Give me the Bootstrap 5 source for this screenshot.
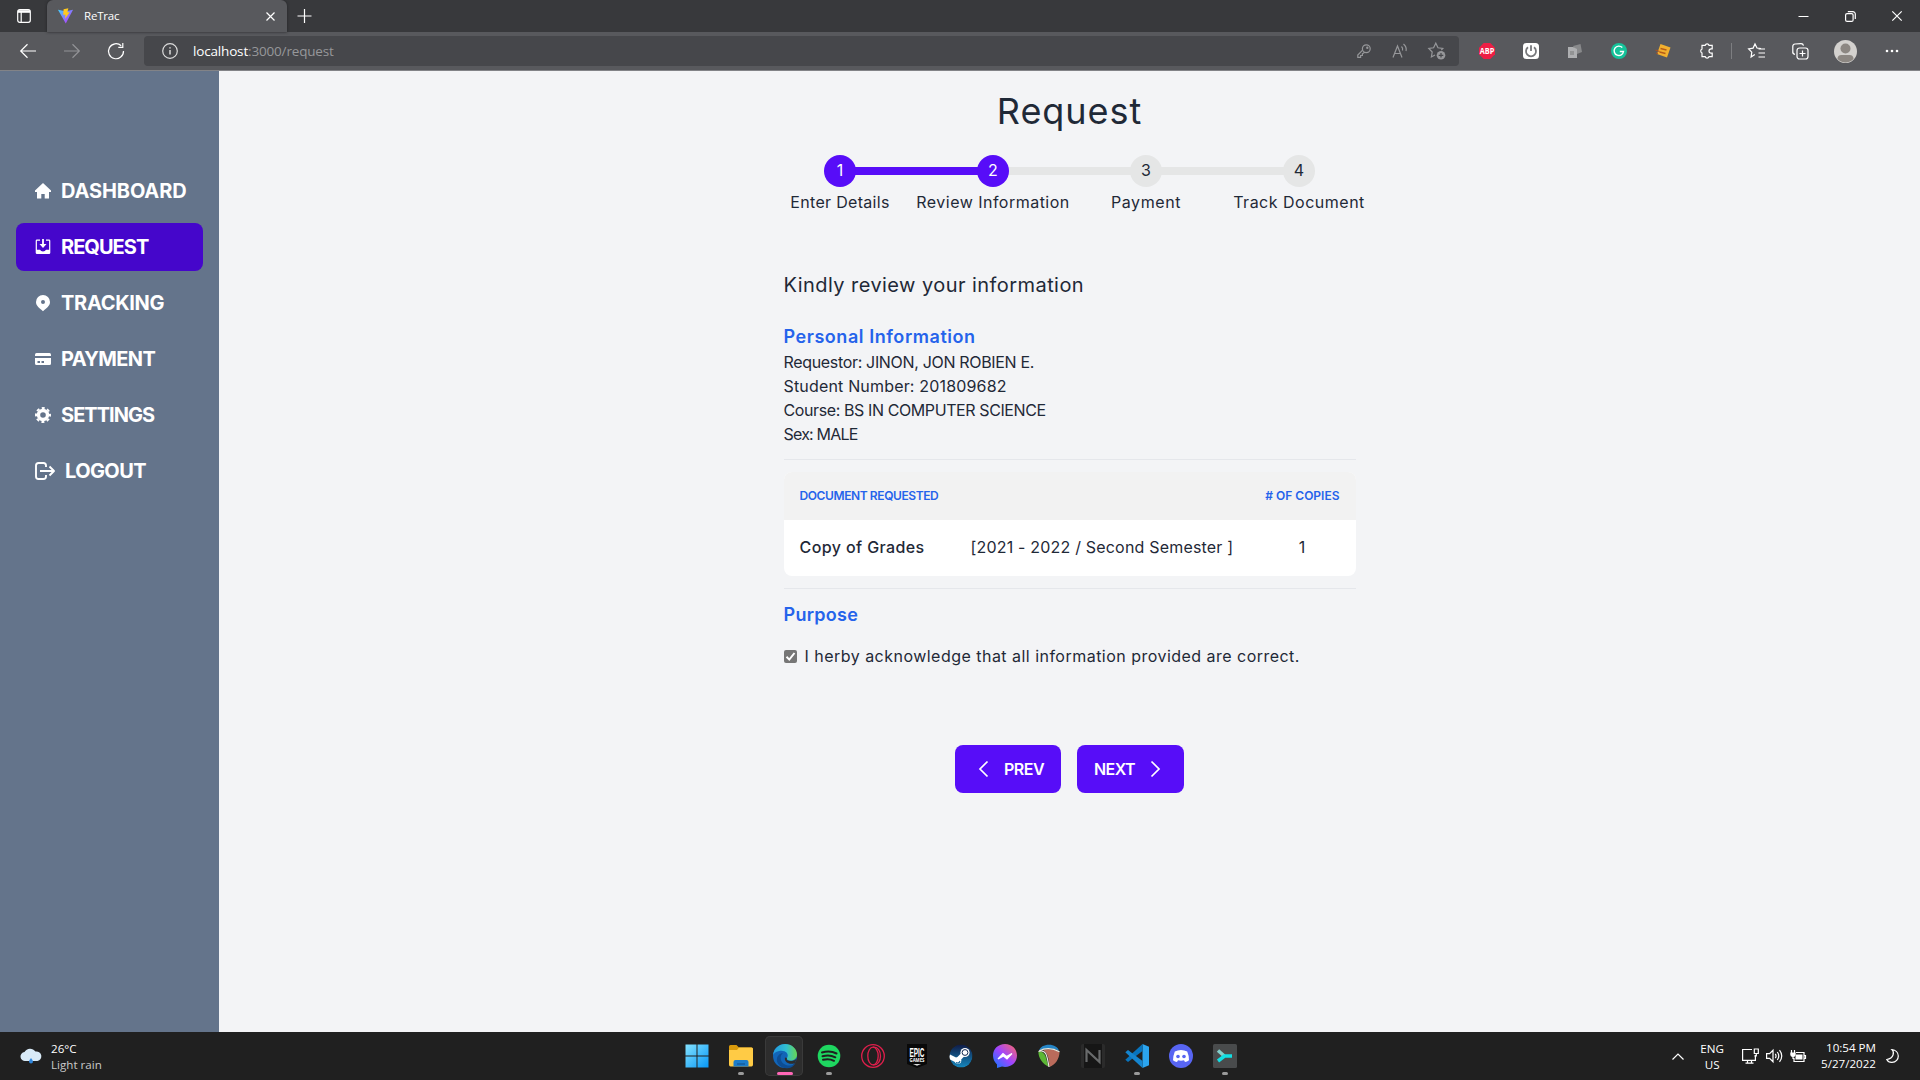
<!DOCTYPE html>
<html lang="en">
<head>
<meta charset="utf-8">
<meta name="viewport" content="width=device-width, initial-scale=1">
<title>ReTrac</title>
<link href="https://cdn.jsdelivr.net/npm/bootstrap@5.3.0/dist/css/bootstrap.min.css" rel="stylesheet">
<style>
body{font-family:Inter,"Liberation Sans",sans-serif;font-size:16px;line-height:24px;color:#1f2937;background:#f3f4f6;height:100vh;overflow:hidden}
svg{display:block;flex:none;fill:none;stroke:currentColor;stroke-width:1.2;overflow:visible}
.os{font-family:"Open Sans","Noto Sans",sans-serif;color:#fff}
.tabstrip{height:32px;background:#38393c}
.tab-lead{width:47px}
.tab-now{width:240px;height:32px;background:#58595d;border-radius:6px 6px 0 0;font-size:11.5px;letter-spacing:-.2px;box-shadow:0 0 3px #222326}
.win-btns{gap:36px;margin-right:18px}
.toolbar{height:39px;background:#58595d;border-bottom:1px solid #828387}
.travel{width:144px;padding-left:20px;gap:28px}
.omni{width:1315px;height:30px;background:#46474b;border-radius:4px;color:#96979a;font-size:13.5px;letter-spacing:-.17px}
.ico{width:44px}
.side{width:219px;background:#64748b;padding:96px 16px 0;gap:8px}
.side a{height:48px;border-radius:8px;color:#fff;font-size:20px;font-weight:700;padding-left:19px;gap:10px;text-decoration:none}
.side a.active{background:#4506cb}
.side svg{fill:#fff;stroke:none}
.title{font-size:36px;line-height:40px;margin:0 0 24px;padding-top:20px;font-weight:400;letter-spacing:.95px}
.steps{width:612px}
.step{width:153px;position:relative}
.step+.step::before{content:"";position:absolute;left:-76px;top:12px;width:153px;height:8px;background:#e5e6e6}
.step.done+.step.done::before{background:#570df8}
.dot{width:32px;height:32px;border-radius:50%;background:#e5e6e6;position:relative;z-index:1;margin-bottom:3px;padding-bottom:2px}
.done .dot{background:#570df8;color:#fff}
.review{width:572px;margin-top:57px}
.intro{font-size:20px;line-height:28px;margin-bottom:24px;letter-spacing:.44px}
.sect{font-size:18px;line-height:28px;color:#2563eb;font-weight:600;margin:0}
.rule{height:1px;background:#e5e7eb}
.docs{border-radius:8px;overflow:hidden;background:#fff;margin:12px 0}
.docs-head{height:48px;background:#f2f2f2;color:#2563eb;font-size:12px;font-weight:600}
.docs-row{height:56px;padding-bottom:2px}
.c1{width:171px}.c2{width:294px}
.tick{width:13px;height:13px;border-radius:2px;background:#767676;color:#fff}
.nav-btn{height:48px;background:#570df8;color:#fff;border-radius:8px;font-weight:600;border:0;padding:0}
.nav-btn:hover{background:#570df8;color:#fff}
.prev-btn{width:106px;padding-left:24px;gap:16px}
.next-btn{width:107px;padding-left:17px}
.next-btn svg{margin-left:auto;margin-right:24px}
.t-dash{letter-spacing:-.12px}.t-req{letter-spacing:-.96px}.t-trk{letter-spacing:-.3px}.t-pay{letter-spacing:-.65px}.t-set{letter-spacing:-.97px}.t-out{letter-spacing:-.6px}
.s1{letter-spacing:.3px}.s2{letter-spacing:.48px}.s3{letter-spacing:.6px}.s4{letter-spacing:.5px}
.t-pi{letter-spacing:.55px}.t-pur{letter-spacing:.28px}
.l1{letter-spacing:-.33px;margin-top:-1px}.l2{letter-spacing:.17px}.l3{letter-spacing:-.4px}.l4{letter-spacing:-.8px}
.hd1{letter-spacing:-.4px}.g1{letter-spacing:.4px}.term{letter-spacing:.19px}.ack{letter-spacing:.475px}
.t-prev{letter-spacing:-.45px}.t-next{letter-spacing:-.6px}
.taskbar{height:48px;background:#202020;font-size:11.6px;line-height:16px;position:relative}
.dim{color:#c8c8c8}
.low{padding-top:2px}
.apps{position:absolute;left:675px;top:0;height:48px}
.app{width:44px;height:48px;position:relative}
.app svg{stroke:none;width:24px;height:24px}
.run::after{content:"";position:absolute;bottom:5px;width:6px;height:3px;border-radius:2px;background:#9a9a9a}
.cur::before{content:"";position:absolute;left:2px;top:4px;width:38px;height:40px;border-radius:5px;background:#2d2d2d;box-shadow:inset 0 0 0 1px #3a3a3a}
.cur::after{width:16px;background:#ff67b7}
.cur svg{position:relative}
</style>
<script src="https://cdn.jsdelivr.net/npm/bootstrap@5.3.0/dist/js/bootstrap.bundle.min.js"></script>
</head>
<body class="d-flex flex-column">
<header class="os flex-shrink-0">
  <div class="tabstrip d-flex align-items-center">
    <div class="tab-lead d-flex justify-content-center"><svg width="14" height="14"><rect x=".7" y=".7" width="12.6" height="12.6" rx="2"/><path d="M1 2.500h12" stroke-width="2.600"/><path d="M4.200 3v10"/></svg></div>
    <div class="tab-now d-flex align-items-center">
      <svg style="margin:0 10px 0 10px" width="17" height="18" viewBox="0 0 18 18" stroke="none"><defs><linearGradient id="v" x2="1" y2="1"><stop stop-color="#41d1ff"/><stop offset=".9" stop-color="#bd34fe"/></linearGradient></defs><path d="M1 2.500 9.300 17 17 2.500 9 4z" fill="url(#v)" stroke="none"/><path d="M7 1.800 12 .8 11 5h2.500L8.500 12 9 7.700H6.500z" fill="#ffc91f" stroke="none"/></svg>
      <span class="flex-grow-1">ReTrac</span>
      <svg width="9" height="9" style="margin-right:12px"><path d="m.5.5 8 8m0-8-8 8"/></svg>
    </div>
    <svg class="ms-2" width="14" height="14" style="margin-top:-1px"><path d="M2.500 7h14M9.500 0v14"/></svg>
    <div class="win-btns d-flex align-items-center ms-auto">
      <svg width="11" height="10"><path d="M.5 5.500h10" stroke-width="1"/></svg>
      <svg width="11" height="11"><rect x=".6" y="2.600" width="7.500" height="7.800" rx="1.500"/><path d="M2.800.6h5a2.500 2.500 0 0 1 2.500 2.500v5"/></svg>
      <svg width="10" height="10"><path d="m.3.3 9.400 9.400m0-9.400-9.400 9.400"/></svg>
    </div>
  </div>
  <div class="toolbar d-flex align-items-center">
    <div class="travel d-flex align-items-center">
      <svg width="16" height="14"><path d="M16 7H.7M7.500.3.7 7l6.800 6.700"/></svg>
      <svg width="16" height="14" style="color:#929397"><path d="M0 7h15.300M8.500.3 15.300 7l-6.800 6.700"/></svg>
      <svg width="16" height="16"><path d="M13.200 2.800A7.500 7.500 0 1 0 15.500 8M14.800 0v4.300h-4.500"/></svg>
    </div>
    <div class="omni d-flex align-items-center">
      <svg width="16" height="16" style="margin-left:18px;margin-right:15px;color:#dcdcdc"><circle cx="8" cy="8" r="7.300"/><path d="M8 7v4.500M8 4.300v1.300" stroke-width="1.500"/></svg>
      <span class="flex-grow-1"><span class="text-white">localhost</span>:3000/request</span>
      <svg width="14" height="14"><circle cx="9.300" cy="4.700" r="3.900"/><circle cx="10.300" cy="3.700" r=".6"/><path d="M5.600 6.200.8 11v2.300h2.800v-1.800h1.800V9.800L7.800 8.300"/></svg>
      <svg width="16" height="16" style="margin-left:21px"><path d="M1 14.500 5.500 3 10 14.500M2.500 10.500h6M9.500 3.500q1.700 1.700 1 4M11.500 1q3.500 3 2.500 7"/></svg>
      <svg width="18" height="18" style="margin:0 13px 0 20px"><path d="m7 13-3.600 2 .8-5L.8 6.500l4.800-.7L7.800 1.200 10 5.800l4.800.7-1.500 1.600"/><circle cx="13" cy="13.300" r="4.300" fill="currentColor" stroke="none"/><path d="M13 11v4.600m-2.300-2.300h4.600" stroke="#46474b"/></svg>
    </div>
    <div class="d-flex align-items-center" style="margin-left:6px">
      <div class="ico d-flex justify-content-center"><svg width="16" height="16" viewBox="0 0 16 16"><path d="M4.700 0h6.600L16 4.700v6.600L11.300 16H4.700L0 11.300V4.700z" fill="#ed1e45" stroke="none"/><text x="8" y="11" font-size="8" font-weight="700" text-anchor="middle" fill="#fff" stroke="none" textLength="14.500" lengthAdjust="spacingAndGlyphs">ABP</text></svg></div>
      <div class="ico d-flex justify-content-center"><svg width="16" height="16"><rect width="16" height="16" rx="3.500" fill="#fff" stroke="none"/><path d="M5 4.300a5 5 0 1 0 6 0M8 2.300V8" stroke="#77787b" stroke-width="1.800"/></svg></div>
      <div class="ico d-flex justify-content-center"><svg width="14" height="14"><g stroke="none"><path d="M5 2 12.500 0 14 8l-5 2z" fill="#88898b"/><path d="M0 3h5l4 2v9H0z" fill="#aeafb1"/><rect x="2" y="7" width="4" height="4" fill="#929394"/></g></svg></div>
      <div class="ico d-flex justify-content-center"><svg width="16" height="16"><circle cx="8" cy="8" r="8" fill="#15c39a" stroke="none"/><path d="M11.300 4.600A4.700 4.700 0 1 0 12.500 8.500H8.800" stroke="#fff" stroke-width="1.400"/></svg></div>
      <div class="ico d-flex justify-content-center"><svg width="16" height="14"><path d="m5.500 0 10 3.500L12 13.500 2 10z" fill="#f2b02e" stroke="none"/><path d="m5.500 4.500 6 1.500m-7 2 6 1.500" stroke="#b65c18" stroke-width="1.500"/><path d="m.5 6 4 1.500M1 9l2 .5" stroke="#a3532a"/></svg></div>
      <div class="ico d-flex justify-content-center"><svg width="16" height="16"><path d="M3 2.300h3.200a2 2 0 0 1 3.800 0h3.200v3.500h-1a2.200 2.200 0 0 0 0 4.400h1v3.500H10a2 2 0 0 1-3.800 0H3v-3.700a2.200 2.200 0 0 1 0-4z"/></svg></div>
      <div style="width:1px;height:16px;background:#7d7e81;margin-left:2px"></div>
      <svg width="17" height="16" style="margin-left:16px"><path d="m6.800 12-3.700 2.500.7-4.800L.6 6.300l4.500-.7L7 1.400 9 5.500l4 .7M10.500 6.500H17m-6.500 4H17m-6.500 4H17" transform="translate(0 -.5)"/></svg>
      <svg width="17" height="17" style="margin-left:27px"><rect x="5" y="5" width="11" height="11" rx="2.500"/><path d="M10.500 7.500v6m-3-3h6M3 11.500A3 3 0 0 1 .8 8V3.500A2.500 2.500 0 0 1 3 1l6-.4a2.500 2.500 0 0 1 2.500 2"/></svg>
      <svg width="23" height="23" style="margin-left:25px"><circle cx="11.500" cy="11.500" r="11.500" fill="#d3d1ce" stroke="none"/><circle cx="11.500" cy="8.500" r="5" fill="#8c8782" stroke="none"/><path d="M3.500 19q0-4 4-4h8q4 0 4 4a11 11 0 0 1-16 0" fill="#8c8782" stroke="none"/></svg>
      <svg width="14" height="4" style="margin-left:28px"><g fill="#fff" stroke="none"><circle cx="2" cy="2" r="1.300"/><circle cx="7" cy="2" r="1.300"/><circle cx="12" cy="2" r="1.300"/></g></svg>
    </div>
  </div>
</header>

<div class="d-flex flex-grow-1">
  <nav class="side d-flex flex-column flex-shrink-0">
    <a href="#" class="d-flex align-items-center"><svg width="16" height="16"><path d="M8 0 0 7.500V9h2v6.500h4.300V11h3.400v4.500H14V9h2V7.500z"/></svg><span class="t-dash">DASHBOARD</span></a>
    <a href="#" class="d-flex align-items-center active"><svg width="16" height="16"><path d="M5 1.700H1.900v9H5q.8 1.800 3 1.800t3-1.800h3.100v-9H11V.5h3q1.300 0 1.300 1.300v11.900q0 1.300-1.300 1.300H2q-1.300 0-1.300-1.300V1.800Q.7.500 2 .5h3z"/><path d="M7.100 0h1.800v5h2.600L8 9 4.500 5h2.600z"/></svg><span class="t-req">REQUEST</span></a>
    <a href="#" class="d-flex align-items-center"><svg width="16" height="16"><path fill-rule="evenodd" d="M8 0a7 7 0 0 0-7 7c0 4 3.500 6 7 9.300C11.500 13 15 11 15 7a7 7 0 0 0-7-7m0 5a2 2 0 1 1 0 4 2 2 0 0 1 0-4"/></svg><span class="t-trk">TRACKING</span></a>
    <a href="#" class="d-flex align-items-center"><svg width="16" height="16"><path d="M0 5V3.500Q0 2 1.500 2h13Q16 2 16 3.500V5z"/><path fill-rule="evenodd" d="M0 7h16v5.500q0 1.500-1.500 1.500h-13Q0 14 0 12.500zm2.500 3v2H5v-2zm4 0v2H9v-2z"/></svg><span class="t-pay">PAYMENT</span></a>
    <a href="#" class="d-flex align-items-center"><svg width="16" height="16"><g fill="none" stroke="#fff"><circle cx="8" cy="8" r="4.500" stroke-width="3.400"/><circle cx="8" cy="8" r="7" stroke-width="2" stroke-dasharray="3 2.498" stroke-dashoffset="1.500"/></g></svg><span class="t-set">SETTINGS</span></a>
    <a href="#" class="d-flex align-items-center"><svg width="20" height="18"><path d="M11 5V3.500Q11 1 8.500 1h-5Q1 1 1 3.500v11Q1 17 3.500 17h5q2.500 0 2.500-2.500V13M5 9h14m-4.500-4.500L19 9l-4.500 4.500" fill="none" stroke="#fff" stroke-width="1.900" stroke-linejoin="round"/></svg><span class="t-out">LOGOUT</span></a>
  </nav>

  <main class="flex-grow-1 d-flex flex-column align-items-center">
    <h1 class="title">Request</h1>
    <div class="steps d-flex text-nowrap">
      <div class="step done d-flex flex-column align-items-center"><div class="dot d-flex align-items-center justify-content-center">1</div><span class="s1">Enter Details</span></div>
      <div class="step done d-flex flex-column align-items-center"><div class="dot d-flex align-items-center justify-content-center">2</div><span class="s2">Review Information</span></div>
      <div class="step d-flex flex-column align-items-center"><div class="dot d-flex align-items-center justify-content-center">3</div><span class="s3">Payment</span></div>
      <div class="step d-flex flex-column align-items-center"><div class="dot d-flex align-items-center justify-content-center">4</div><span class="s4">Track Document</span></div>
    </div>
    <section class="review">
      <p class="intro">Kindly review your information</p>
      <h2 class="sect t-pi">Personal Information</h2>
      <div class="l1">Requestor: JINON, JON ROBIEN E.</div>
      <div class="l2">Student Number: 201809682</div>
      <div class="l3">Course: BS IN COMPUTER SCIENCE</div>
      <div class="l4">Sex: MALE</div>
      <div class="rule" style="margin-top:13px"></div>
      <div class="docs">
        <div class="docs-head d-flex align-items-center justify-content-between px-3"><span class="hd1">DOCUMENT REQUESTED</span><span># OF COPIES</span></div>
        <div class="docs-row d-flex align-items-center px-3 text-nowrap"><span class="c1 g1 fw-medium">Copy of Grades</span><span class="c2 term">[2021 - 2022 / Second Semester ]</span><span class="flex-grow-1 text-center">1</span></div>
      </div>
      <div class="rule"></div>
      <h2 class="sect t-pur" style="margin-top:12px">Purpose</h2>
      <label class="d-flex align-items-center" style="margin-top:15px"><span class="tick me-2"><svg width="13" height="13"><path d="m2.500 6.800 2.800 2.800L10.500 3" stroke-width="2"/></svg></span><span class="ack">I herby acknowledge that all information provided are correct.</span></label>
    </section>
    <div class="d-flex gap-3" style="margin-top:77px">
      <button class="btn nav-btn prev-btn d-flex align-items-center"><svg width="9" height="16"><path d="M8.500.5 1 8l7.500 7.500" stroke-width="1.700"/></svg><span class="t-prev">PREV</span></button>
      <button class="btn nav-btn next-btn d-flex align-items-center"><span class="t-next">NEXT</span><svg width="9" height="16"><path d="M.5.5 8 8 .5 15.500" stroke-width="1.700"/></svg></button>
    </div>
  </main>
</div>

<footer class="taskbar os d-flex align-items-center flex-shrink-0">
  <svg width="22" height="18" style="margin-left:20px;margin-right:9px"><path d="M5.500 14a4.500 4.500 0 0 1-1-9 6.500 6.500 0 0 1 11-.5A4.800 4.800 0 0 1 17.500 14z" fill="#d9ebf8" stroke="none"/><path d="M11 11q-2 2.500-2 3.500a2 2 0 0 0 4 0q0-1-2-3.500" fill="#2f86dc" stroke="none"/></svg>
  <div class="low"><div>26°C</div><div class="dim">Light rain</div></div>
  <div class="apps d-flex">
    <div class="app d-flex align-items-center justify-content-center"><svg viewBox="0 0 24 24"><defs><linearGradient id="w" x2="1" y2="1"><stop stop-color="#84e2ff"/><stop offset="1" stop-color="#0797f5"/></linearGradient></defs><path d="M.5.5h11v11H.5zM12.500.5h11v11h-11zM.5 12.500h11v11H.5zM12.500 12.500h11v11h-11z" fill="url(#w)"/></svg></div>
    <div class="app run d-flex align-items-center justify-content-center"><svg viewBox="0 0 24 24"><path d="M0 2.500Q0 1 1.500 1h6L10 3.500h12.500Q24 3.500 24 5v6H0z" fill="#d99a0c"/><path d="M0 6h8l2-2.500h12.500Q24 3.500 24 5v15.500q0 2-1.500 2h-21q-1.500 0-1.500-2z" fill="#ffcb45"/><path d="M4.500 22.500V18q0-2 2-2h11q2 0 2 2v4.500z" fill="#1c7cc9"/><path d="M8 20h8" stroke="#155c9c" stroke-width="1.500"/></svg></div>
    <div class="app run cur d-flex align-items-center justify-content-center"><svg viewBox="0 0 24 24"><defs><linearGradient id="e1" x2="1"><stop stop-color="#2299e0"/><stop offset=".55" stop-color="#31bfd1"/><stop offset="1" stop-color="#67d752"/></linearGradient></defs><circle cx="12" cy="12" r="12" fill="#1265b7"/><path d="M0 11C1 4 6 0 12 0c7 0 12 5 12 10.500 0 4-3 6-6.500 6-3 0-4-1.200-3.500-2.500C17 9 11 5.500 6 7 2.500 8 .5 9.500 0 11" fill="url(#e1)"/><path d="M10 9c-4 3-3 10 3 12 4 1.300 7 .5 9.500-2-3 6-10 6-13 4.500C1 19 3 10 10 9" fill="#0d4d93"/><path d="M14 14c-1 2 1 3 3.500 3 2.500 0 4-.5 5.800-2-.2 1.500-.8 3-1.500 4-5 2.500-11-1-9.800-5.500z" fill="#2d2d2d"/></svg></div>
    <div class="app run d-flex align-items-center justify-content-center"><svg viewBox="0 0 24 24"><circle cx="12" cy="12" r="11.300" fill="#1ed760"/><path d="M5 8.500q8-2.500 14.500 1M5.500 12.300q7-2 12.800 1M6 15.800q6-1.600 11 1" fill="none" stroke="#202020" stroke-width="2" stroke-linecap="round"/></svg></div>
    <div class="app d-flex align-items-center justify-content-center"><svg viewBox="0 0 24 24"><g fill="none" stroke="#df1f4c" stroke-width="1.300"><circle cx="12" cy="12" r="11.300"/><ellipse cx="12" cy="12" rx="5.200" ry="8.800"/><path d="M12 3.200c10-1.500 10 19 0 17.600"/></g></svg></div>
    <div class="app d-flex align-items-center justify-content-center"><svg viewBox="0 0 24 24"><path d="M2 0h20v20L12 24 2 20z" fill="#090909"/><text x="12" y="12.500" text-anchor="middle" fill="#fff" font-family="Liberation Sans" font-size="12" font-weight="700" textLength="15" lengthAdjust="spacingAndGlyphs">EPIC</text><text x="12" y="17.800" text-anchor="middle" fill="#fff" font-size="4.500" font-weight="700" textLength="15" lengthAdjust="spacingAndGlyphs">GAMES</text><path d="M8 20h8l-4 1.800z" fill="#ddd"/></svg></div>
    <div class="app d-flex align-items-center justify-content-center"><svg viewBox="0 0 24 24"><defs><linearGradient id="st" x2="0" y2="1"><stop stop-color="#101b46"/><stop offset="1" stop-color="#1587bd"/></linearGradient><clipPath id="sc"><circle cx="12" cy="12" r="11.500"/></clipPath></defs><g clip-path="url(#sc)"><circle cx="12" cy="12" r="11.500" fill="url(#st)"/><path d="m0 12.500 8 4 7-7" stroke="#fff" stroke-width="4.500" fill="none"/><circle cx="16" cy="8.500" r="4.600" fill="#fff"/><circle cx="16" cy="8.500" r="2.900" fill="#fff" stroke="#14294f" stroke-width="1"/><circle cx="9" cy="16.500" r="3.300" fill="#fff"/><path d="M7 18.500q3 1.500 4-1.500" fill="none" stroke="#1a6a9e"/></g></svg></div>
    <div class="app d-flex align-items-center justify-content-center"><svg viewBox="0 0 24 24"><defs><linearGradient id="ms" x1="0" y1="1" x2="1" y2="0"><stop stop-color="#0a7cff"/><stop offset=".5" stop-color="#a044ff"/><stop offset="1" stop-color="#ff6a61"/></linearGradient></defs><path d="M12 0c7 0 12 5 12 11.500S19 23 12 23l-3-.4L4 24v-3.500C1.500 18 0 15 0 11.500 0 5 5 0 12 0" fill="url(#ms)"/><path d="m5 15 5-5.500 3.500 3L19 9.500l-5 5.500-3.500-3z" fill="#fff" stroke="#fff"/></svg></div>
    <div class="app d-flex align-items-center justify-content-center"><svg viewBox="0 0 24 24"><path d="M12 .8c5 0 9 2.500 10 6-6-3-14-3-20 0C3 3 7 .8 12 .8" fill="#2585c6"/><path d="M1.500 7.500C5 7 7 9 8.500 12l3 10.800C6 20 1 14 1.500 7.500" fill="#5cb735"/><path d="M6 6c6-1.500 12-.5 16.500 2C22.500 15 18 21 12.500 23 12 15 11 9 6 6" fill="#ba6b5b"/><path d="M1.500 7.500C9 5 10 11 12 23M2 7q10-5 20.500.8" fill="none" stroke="#e8eadf" stroke-width="1.200"/></svg></div>
    <div class="app d-flex align-items-center justify-content-center"><svg viewBox="0 0 24 24"><rect width="24" height="24" rx="2" fill="#2b2b2b"/><path d="M3 0h18v24H3z" fill="#161616"/><path d="M5.500 18V6l13 12V6" fill="none" stroke="#696b6c" stroke-width="2.200"/></svg></div>
    <div class="app run d-flex align-items-center justify-content-center"><svg viewBox="0 0 24 24"><path d="M17.500 0 24 2.800v18.400L17.500 24z" fill="#2ba5ef"/><path d="M17.500 0v7L3 18 .3 15.700z" fill="#0874bd"/><path d="M17.500 24v-7L3 6 .3 8.300z" fill="#1585cf"/></svg></div>
    <div class="app d-flex align-items-center justify-content-center"><svg viewBox="0 0 24 24"><circle cx="12" cy="12" r="12" fill="#5865f2"/><path d="M8.800 6.500q3.200-.8 6.400 0l3 1q2 4.500 1.800 8.700-2 1.500-4 1.800l-1-1.700q-3 .8-6 0L8 18q-2-.3-4-1.800Q4 12 5.800 7.500z" fill="#fff"/><circle cx="9" cy="12.500" r="1.800" fill="#5865f2"/><circle cx="15" cy="12.500" r="1.800" fill="#5865f2"/></svg></div>
    <div class="app run d-flex align-items-center justify-content-center"><svg viewBox="0 0 24 24"><rect width="24" height="24" rx="1.500" fill="#494b4c"/><path d="m5 6.500 6 5.300" stroke="#83cdc9" stroke-width="3.500"/><path d="m5 17 6.500-5H19" fill="none" stroke="#12dfe4" stroke-width="3.500"/></svg></div>
  </div>
  <div class="d-flex align-items-center ms-auto">
    <svg width="12" height="7"><path d="m.5 6.500 5.500-5.500 5.500 5.500"/></svg>
    <div class="text-center low" style="width:24px;margin-left:16px;margin-right:18px">ENG<br>US</div>
    <svg width="17" height="16"><path d="M10 1.500H.6v10.800h12.800V7M3.500 15.200h8M5.500 12.500v2.500m4-2.500v2.500M12.300 1h4v4.500h-4zM14.300 5.500V8h-2"/></svg>
    <svg width="17" height="14" style="margin-left:7px"><path d="M.6 4.700h3L7 1.300v11.400L3.600 9.300h-3zM9.300 4.800q1.500 2.200 0 4.400M11.300 3q3 4 0 8M13.500 1.200q4.500 5.800 0 11.600"/></svg>
    <svg width="16" height="13" style="margin-left:7px"><path d="M6 2.500h8v9H4V8M14.500 5.500h1v3h-1M1.500 0v3m3-3v3M3 6v3"/><path d="M6 4.500h6.500v5H5.500V7zM.3 2.500h5.400V5Q5.500 7 3 7T.3 5z" fill="currentColor" stroke="none"/></svg>
    <div class="text-end" style="margin-left:15px;margin-right:10px">10:54 PM<br>5/27/2022</div>
    <svg width="13" height="14" style="margin-right:21px"><path d="M6 .7c2.500 2.500 2 8.500-5.200 9.800C2 13 4 13.500 6 13.400c4 0 6.300-3.200 6.300-6.400C12.300 3.500 9.500 1 6 .7z"/></svg>
  </div>
</footer>
</body>
</html>
